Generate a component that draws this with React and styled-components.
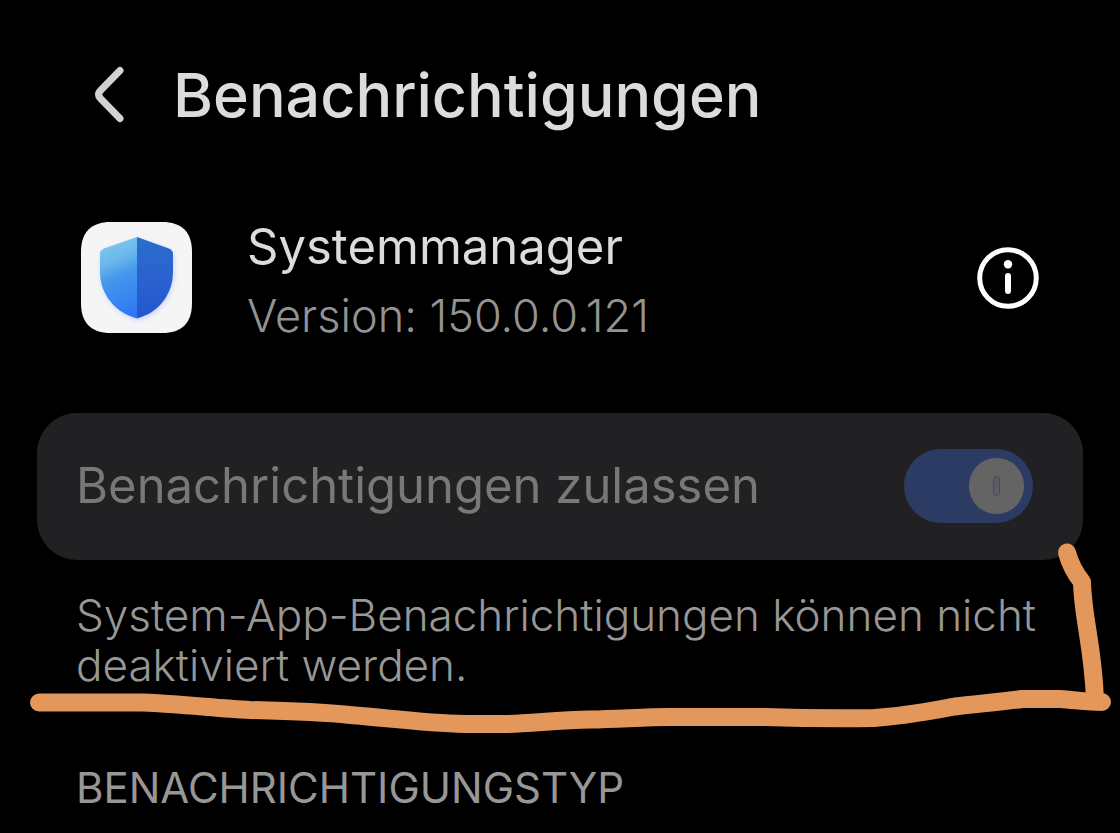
import React, { useId } from 'react';
import styled, { createGlobalStyle } from 'styled-components';

const GlobalStyle = createGlobalStyle`
  *, *::before, *::after {
    box-sizing: border-box;
  }

  body {
    margin: 0;
    background-color: #000;
    font-family: Inter, "Noto Sans", sans-serif;
    overflow-x: hidden;
  }
`;

const Screen = styled.main`
  position: relative;
  min-height: 100vh;
  padding: 56px 37px 0;
  background-color: #000;
  color: #dcdcdc;
`;

const Header = styled.header`
  display: flex;
  align-items: center;
  gap: 38px;
  height: 78px;
  padding-left: 48px;
`;

const IconButton = styled.button`
  display: flex;
  flex-shrink: 0;
  padding: 0;
  border: 0;
  background: none;
  color: ${(props) => props.$color};
  cursor: pointer;
`;

const Title = styled.h1`
  margin: 0;
  font-size: 61px;
  font-weight: 500;
  line-height: 78px;
`;

const AppRow = styled.section`
  display: flex;
  align-items: center;
  margin-top: 70px;
  padding: 0 44px;
`;

const AppText = styled.div`
  flex: 1;
  margin-left: 55px;
  padding-top: 9px;
`;

const AppName = styled.h2`
  margin: 0;
  font-size: 49px;
  font-weight: 400;
  line-height: 68px;
`;

const Version = styled.p`
  margin: 0;
  color: #939393;
  font-size: 45px;
  font-weight: 300;
  line-height: 70px;
`;

const Card = styled.label`
  display: flex;
  align-items: center;
  justify-content: space-between;
  margin-top: 62px;
  padding: 36px 50px 37px 39px;
  border-radius: 40px;
  background-color: #212123;
`;

const CardLabel = styled.span`
  color: #787878;
  font-size: 49px;
  font-weight: 400;
  line-height: 74px;
`;

const Switch = styled.input`
  appearance: none;
  position: relative;
  display: flex;
  align-items: center;
  justify-content: flex-end;
  flex-shrink: 0;
  width: 129px;
  height: 74px;
  margin: 0;
  padding: 9px;
  border-radius: 37px;
  background-color: #2c3b63;

  &::before {
    content: '';
    width: 55px;
    height: 56px;
    border-radius: 28px;
    background-color: #646464;
  }

  &::after {
    content: '';
    position: absolute;
    top: 27px;
    right: 33px;
    width: 7px;
    height: 20px;
    border: 1px solid #4a4a56;
    border-radius: 4px;
    background-color: #5c5c68;
  }
`;

const Hint = styled.p`
  margin: 30px 0 0;
  padding: 0 39px;
  color: #979797;
  font-size: 44px;
  font-weight: 300;
  line-height: 50px;
`;

const SectionTitle = styled.h3`
  margin: 70px 0 0;
  padding: 0 39px;
  color: #979797;
  font-size: 42px;
  font-weight: 400;
  line-height: 56px;
  text-transform: uppercase;
`;

const Marker = styled.svg`
  position: absolute;
  top: 0;
  left: 0;
  width: 100%;
  pointer-events: none;
`;

const BackIcon = () => (
  <svg width="50" height="64" viewBox="0 0 50 64" fill="none" aria-hidden="true">
    <path
      d="M35 7.5 L15.500 27.5 Q11.500 31.5 15.500 35.5 L35 55.500"
      stroke="currentColor"
      strokeWidth="7"
      strokeLinecap="round"
      strokeLinejoin="round"
    />
  </svg>
);

const InfoIcon = () => (
  <svg width="63" height="63" viewBox="0 0 63 63" fill="none" aria-hidden="true">
    <circle cx="32" cy="32" r="28.3" stroke="currentColor" strokeWidth="5" />
    <circle cx="32" cy="18.3" r="4.2" fill="currentColor" />
    <path d="M32 30 V45" stroke="currentColor" strokeWidth="6" strokeLinecap="round" />
  </svg>
);

const ShieldIcon = () => {
  const id = useId();
  return (
    <svg width="111" height="111" viewBox="0 0 111 111" aria-hidden="true">
      <defs>
        <linearGradient id={`${id}l`} x1="0.35" y1="0" x2="0.55" y2="1">
          <stop offset="0" stopColor="#80c8ee" />
          <stop offset="0.28" stopColor="#6bb8ed" />
          <stop offset="0.5" stopColor="#4497ec" />
          <stop offset="1" stopColor="#2f78f3" />
        </linearGradient>
        <linearGradient id={`${id}r`} x1="0.5" y1="0" x2="0.5" y2="1">
          <stop offset="0" stopColor="#2c6fca" />
          <stop offset="0.5" stopColor="#2a62d0" />
          <stop offset="1" stopColor="#2456cf" />
        </linearGradient>
        <filter id={`${id}s`} x="-20%" y="-20%" width="140%" height="140%">
          <feDropShadow dx="1" dy="2" stdDeviation="2.5" floodColor="#9db8ff" floodOpacity="0.5" />
        </filter>
      </defs>
      <path
        d="M30 0 H81 C101 0 111 10 111 30 V81 C111 101 101 111 81 111 H30 C10 111 0 101 0 81 V30 C0 10 10 0 30 0 Z"
        fill="#f5f5f6"
      />
      <g filter={`url(#${id}s)`}>
        <path d="M56 15 L23 26.5 Q19 28 19 32 V50 C19 73 35 91 56 96.5 Z" fill={`url(#${id}l)`} />
        <path d="M56 15 L88 26.5 Q92 28 92 32 V50 C92 73 77 91 56 96.5 Z" fill={`url(#${id}r)`} />
      </g>
    </svg>
  );
};

const App = () => {
  return (
    <>
      <GlobalStyle />
      <Screen>
        <Header>
          <IconButton type="button" aria-label="Zurück" $color="#d2d2d2">
            <BackIcon />
          </IconButton>
          <Title>Benachrichtigungen</Title>
        </Header>

        <AppRow>
          <ShieldIcon />
          <AppText>
            <AppName>Systemmanager</AppName>
            <Version>Version: 150.0.0.121</Version>
          </AppText>
          <IconButton type="button" aria-label="App-Info" $color="#fff">
            <InfoIcon />
          </IconButton>
        </AppRow>

        <Card htmlFor="allow">
          <CardLabel>Benachrichtigungen zulassen</CardLabel>
          <Switch id="allow" type="checkbox" role="switch" defaultChecked disabled />
        </Card>
        <Hint>System-App-Benachrichtigungen können nicht deaktiviert werden.</Hint>

        <SectionTitle>Benachrichtigungstyp</SectionTitle>

        <Marker viewBox="0 0 1120 833" fill="none" aria-hidden="true">
          <path
            d="M39 702.5 H143 C180 704 215 708 250 710 C290 711 320 712 350 715 C390 718 420 723 465 724 H508 C535 723 560 720 590 719.5 C620 719 645 717 670 717 H765 C795 718 830 718.5 874 718 C905 716 930 711 955 706.5 C975 704 1000 702 1022 699 H1060 C1075 700 1088 702 1102 702"
            stroke="#e4975b"
            strokeWidth="18"
            strokeLinecap="round"
            strokeLinejoin="round"
          />
          <path
            d="M1067 552.5 Q1071 568 1082 582 C1083 620 1093 645 1095 700"
            stroke="#e4975b"
            strokeWidth="18"
            strokeLinecap="round"
            strokeLinejoin="round"
          />
        </Marker>
      </Screen>
    </>
  );
};

export default App;
